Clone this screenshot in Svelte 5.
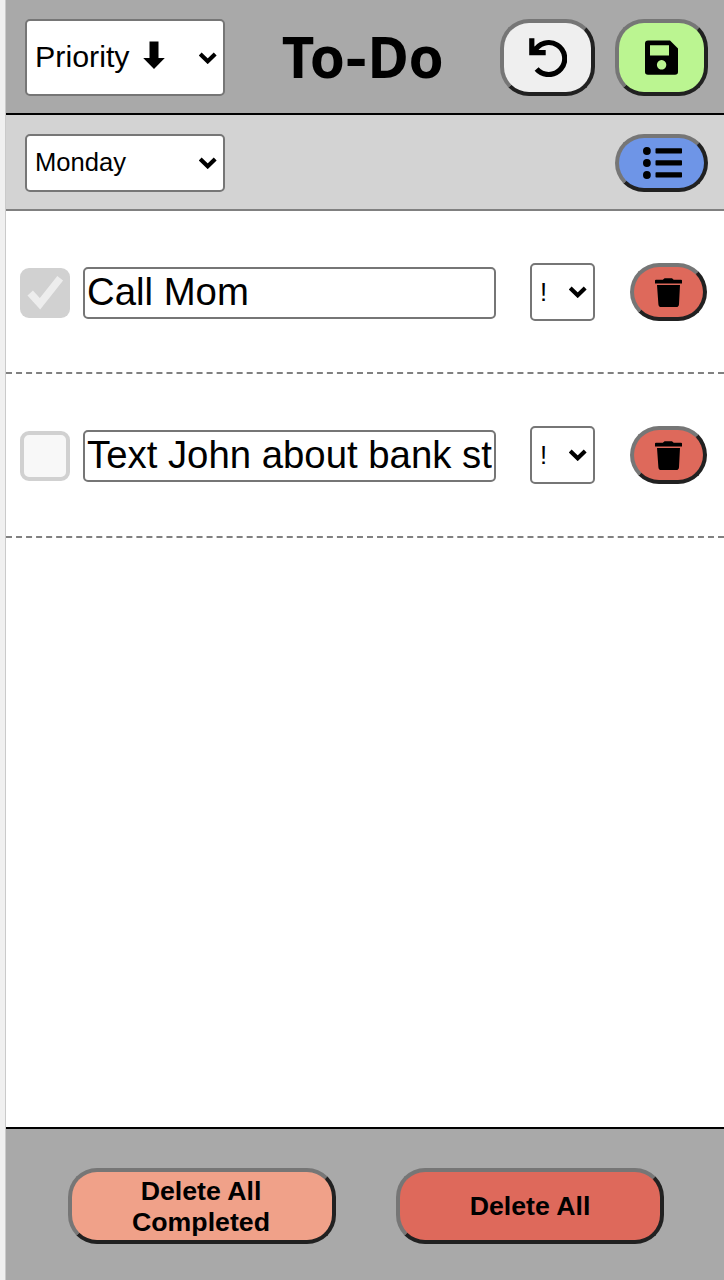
<script>
  let sort = $state('priority');
  let day = $state('Monday');
  let tasks = $state([
    { id: 1, text: 'Call Mom', done: true, level: '!' },
    { id: 2, text: 'Text John about bank statement', done: false, level: '!' }
  ]);
  const days = ['Monday', 'Tuesday', 'Wednesday', 'Thursday', 'Friday', 'Saturday', 'Sunday'];

  const remove = (id) => (tasks = tasks.filter((t) => t.id !== id));
</script>

{#snippet chevron()}
  <svg class="chevron" width="18" height="12" viewBox="0 0 18 12">
    <path d="M1.2 2 L8.7 9.3 L16.2 2" fill="none" stroke="#000" stroke-width="4.1" />
  </svg>
{/snippet}

<div class="page">
  <main class="app">
    <header class="top">
      <div class="select big">
        <select bind:value={sort} aria-label="Sort">
          <option value="priority">Priority</option>
        </select>
        <svg class="down" width="22" height="28" viewBox="0 0 22 28">
          <path d="M6.5 0.5 H15.5 V17 H21.8 L11 28 L0.2 17 H6.5 Z" />
        </svg>
        {@render chevron()}
      </div>
      <h1>To<span>-</span>Do</h1>
      <button class="btn undo" aria-label="Undo">
        <svg width="38" height="39" viewBox="0 0 38 39">
          <path d="M7.6 31 A16 16 0 1 0 5.2 13.8" fill="none" stroke="#000" stroke-width="5.2" />
          <path d="M0.2 0.2 H5.4 V8.5 L9 9 L8.5 12 H16.7 V17.2 H0.2 Z" />
        </svg>
      </button>
      <button class="btn save" aria-label="Save">
        <svg width="33" height="35" viewBox="0 0 33 35">
          <path
            fill-rule="evenodd"
            d="M3 0.5 H25 L33 8.5 V32 Q33 34.8 30 34.8 H3 Q0 34.8 0 32 V3.5 Q0 0.5 3 0.5 Z M5 5.2 V15.5 H24 V5.2 Z M16.6 20 a4.7 4.8 0 1 0 0.01 0 Z"
          />
        </svg>
      </button>
    </header>

    <section class="sub">
      <div class="select mid">
        <select bind:value={day} aria-label="Day">
          {#each days as d}<option>{d}</option>{/each}
        </select>
        {@render chevron()}
      </div>
      <button class="btn list" aria-label="List">
        <svg width="39" height="32" viewBox="0 0 39 32">
          {#each [4, 16, 28] as y}
            <circle cx="3.9" cy={y} r="3.9" />
            <rect x="12.5" y={y - 2.7} width="26.5" height="5.2" rx="0.8" />
          {/each}
        </svg>
      </button>
    </section>

    <ul>
      {#each tasks as task (task.id)}
        <li>
          <span class="check" class:done={task.done} role="checkbox" aria-checked={task.done} tabindex="-1">
            {#if task.done}
              <svg width="50" height="50" viewBox="0 0 50 50">
                <path d="M10.2 25 L20 35.8 L40.2 10.3" fill="none" stroke="#ededed" stroke-width="7.4" />
              </svg>
            {/if}
          </span>
          <input class="text" bind:value={task.text} aria-label="Task" />
          <div class="select level">
            <select bind:value={task.level} aria-label="Level">
              <option>!</option><option>!!</option><option>!!!</option>
            </select>
            {@render chevron()}
          </div>
          <button class="btn trash" aria-label="Delete" onclick={() => remove(task.id)}>
            <svg width="27" height="29" viewBox="0 0 27 29">
              <path
                d="M0 2.6 Q0 1.7 1 1.7 H7.8 L9.6 0.2 H17 L18.7 1.7 H26 Q27 1.7 27 2.6 V5.4 H0 Z M2 7 H25 L24 26.2 Q23.8 29 21.3 29 H6 Q3.6 29 3.4 26.2 Z"
              />
            </svg>
          </button>
        </li>
      {/each}
    </ul>

    <footer>
      <button class="btn wide completed">Delete All Completed</button>
      <button class="btn wide all">Delete All</button>
    </footer>
  </main>
</div>

<style>
  :global(body) {
    margin: 0;
    background: #f0f0f0;
  }
  .page {
    box-sizing: border-box;
    height: 1280px;
    padding-left: 5px;
    font-family: 'Liberation Sans', Arial, sans-serif;
    color: #000;
  }
  .app {
    box-sizing: border-box;
    height: 100%;
    display: flex;
    flex-direction: column;
    background: #fff;
    border-left: 1px solid #cacaca;
  }
  svg {
    display: block;
    flex: none;
  }
  .top,
  .sub {
    box-sizing: border-box;
    display: flex;
    align-items: center;
    padding: 2px 16px 0 19px;
  }
  .top {
    height: 115px;
    background: #a9a9a9;
    border-bottom: 2px solid #000;
  }
  .sub {
    height: 96px;
    justify-content: space-between;
    background: #d3d3d3;
    border-bottom: 2px solid #808080;
  }
  h1 {
    flex: 1;
    margin: 0;
    padding-bottom: 2px;
    text-align: center;
    font: bold 56.5px/76px 'Noto Sans', sans-serif;
    letter-spacing: -0.4px;
  }
  h1 span {
    display: inline-block;
    margin: 0 3px 0 2px;
    transform: scaleX(1.15);
  }
  .select {
    display: grid;
    grid-template: 1fr / 1fr;
    align-items: center;
    box-sizing: border-box;
    flex: none;
  }
  .select > * {
    grid-area: 1 / 1;
  }
  .select select {
    appearance: none;
    box-sizing: border-box;
    width: 100%;
    height: 100%;
    margin: 0;
    padding: 0 0 0 8px;
    border: 2px solid #767676;
    border-radius: 5px;
    background: #fff;
    color: #000;
    font: 25.6px 'Liberation Sans', Arial, sans-serif;
  }
  .chevron {
    justify-self: end;
    margin-right: 8px;
    pointer-events: none;
  }
  .big {
    width: 200px;
    height: 77px;
  }
  .big select {
    font-size: 30.4px;
    padding-bottom: 4px;
  }
  .down {
    margin: 0 0 5px 118px;
    pointer-events: none;
  }
  .mid {
    width: 200px;
    height: 58px;
  }
  .mid select {
    padding-bottom: 2px;
  }
  .btn {
    box-sizing: border-box;
    flex: none;
    display: flex;
    align-items: center;
    justify-content: center;
    padding: 0;
    border: 4px solid;
    border-color: #767676 #212121 #212121 #767676;
    border-radius: 29px;
    color: #000;
  }
  .undo {
    width: 95px;
    height: 77px;
    background: #efefef;
    margin-right: 20px;
  }
  .save {
    width: 93px;
    height: 77px;
    background: #bbf591;
  }
  .list {
    width: 93px;
    height: 58px;
    padding-left: 2px;
    background: #6e95e7;
  }
  ul {
    flex: 1;
    margin: 0;
    padding: 0;
    list-style: none;
  }
  li {
    box-sizing: border-box;
    height: 163.3px;
    display: flex;
    align-items: center;
    padding: 1px 0 0 14px;
    border-bottom: 2px dashed #808080;
  }
  .check {
    box-sizing: border-box;
    width: 50px;
    height: 50px;
    border: 4px solid #d1d1d1;
    border-radius: 9px;
    background: #f8f8f8;
    margin: 2px 13px 0 0;
  }
  .check.done {
    border: 0;
    background: #d1d1d1;
  }
  .text {
    box-sizing: border-box;
    width: 413px;
    height: 52px;
    margin: 2px 34px 0 0;
    padding: 0 2px 2px;
    border: 2px solid #767676;
    border-radius: 5px;
    background: #fff;
    color: #000;
    font: 38.35px 'Liberation Sans', Arial, sans-serif;
  }
  .level {
    width: 65px;
    height: 58px;
    margin-right: 35px;
  }
  .trash {
    width: 77px;
    height: 58px;
    background: #de695b;
  }
  footer {
    box-sizing: border-box;
    height: 153px;
    display: flex;
    align-items: center;
    gap: 60px;
    padding: 2px 0 0 62px;
    background: #a9a9a9;
    border-top: 2px solid #000;
  }
  .wide {
    width: 268px;
    height: 76px;
    padding: 1px 50px 0;
    font: bold 26.7px/31px 'Liberation Sans', Arial, sans-serif;
  }
  .completed {
    padding: 2px 52px 0 50px;
    background: #f0a189;
  }
  .all {
    background: #de695b;
  }
</style>
